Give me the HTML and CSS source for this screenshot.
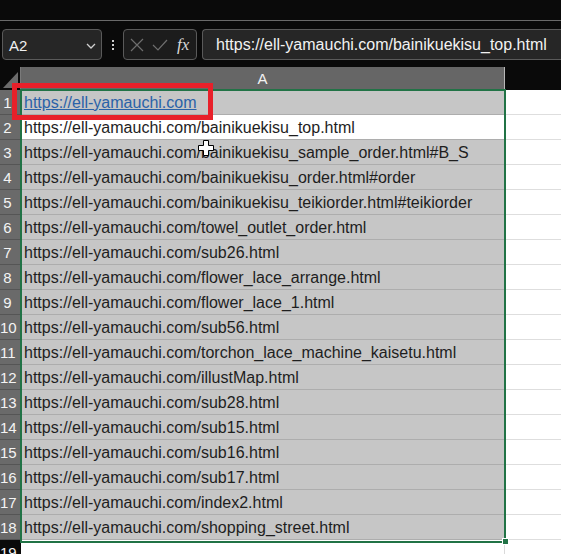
FILE: index.html
```html
<!DOCTYPE html>
<html>
<head>
<meta charset="utf-8">
<link rel="stylesheet" href="styles.css">
</head>
<body>
<div class="app">
  <div class="topbar"></div>
  <div class="formula-row">
    <div class="namebox">
      <span class="cellref">A2</span>
      <svg class="chev" width="10" height="6" viewBox="0 0 10 6"><path d="M1 1 L5 5 L9 1" fill="none" stroke="#d0d0d0" stroke-width="1.3"/></svg>
    </div>
    <div class="dots"><i></i><i></i><i></i></div>
    <div class="fxbox">
      <svg width="14" height="14" viewBox="0 0 14 14"><path d="M1 1 L13 13 M13 1 L1 13" stroke="#6e6e6e" stroke-width="1.2" fill="none"/></svg>
      <svg width="16" height="12" viewBox="0 0 16 12"><path d="M1 6 L6 11 L15 1" stroke="#6e6e6e" stroke-width="1.2" fill="none"/></svg>
      <span class="fx">fx</span>
    </div>
    <div class="formula">https://ell-yamauchi.com/bainikuekisu_top.html</div>
  </div>
  <div class="sheet">
    <div class="grid">
      <div class="corner"><svg width="21" height="23" viewBox="0 0 21 23"><polygon points="3,21 18,21 18,5" fill="#6b6b6b"/></svg></div>
      <div class="colhead">A</div>
      <div class="colrest"></div>

      <div class="rh">1</div><div class="c sel"><span class="link">https://ell-yamauchi.com</span></div><div class="b"></div>
      <div class="rh">2</div><div class="c active">https://ell-yamauchi.com/bainikuekisu_top.html</div><div class="b"></div>
      <div class="rh">3</div><div class="c sel">https://ell-yamauchi.com/bainikuekisu_sample_order.html#B_S</div><div class="b"></div>
      <div class="rh">4</div><div class="c sel">https://ell-yamauchi.com/bainikuekisu_order.html#order</div><div class="b"></div>
      <div class="rh">5</div><div class="c sel">https://ell-yamauchi.com/bainikuekisu_teikiorder.html#teikiorder</div><div class="b"></div>
      <div class="rh">6</div><div class="c sel">https://ell-yamauchi.com/towel_outlet_order.html</div><div class="b"></div>
      <div class="rh">7</div><div class="c sel">https://ell-yamauchi.com/sub26.html</div><div class="b"></div>
      <div class="rh">8</div><div class="c sel">https://ell-yamauchi.com/flower_lace_arrange.html</div><div class="b"></div>
      <div class="rh">9</div><div class="c sel">https://ell-yamauchi.com/flower_lace_1.html</div><div class="b"></div>
      <div class="rh">10</div><div class="c sel">https://ell-yamauchi.com/sub56.html</div><div class="b"></div>
      <div class="rh">11</div><div class="c sel">https://ell-yamauchi.com/torchon_lace_machine_kaisetu.html</div><div class="b"></div>
      <div class="rh">12</div><div class="c sel">https://ell-yamauchi.com/illustMap.html</div><div class="b"></div>
      <div class="rh">13</div><div class="c sel">https://ell-yamauchi.com/sub28.html</div><div class="b"></div>
      <div class="rh">14</div><div class="c sel">https://ell-yamauchi.com/sub15.html</div><div class="b"></div>
      <div class="rh">15</div><div class="c sel">https://ell-yamauchi.com/sub16.html</div><div class="b"></div>
      <div class="rh">16</div><div class="c sel">https://ell-yamauchi.com/sub17.html</div><div class="b"></div>
      <div class="rh">17</div><div class="c sel">https://ell-yamauchi.com/index2.html</div><div class="b"></div>
      <div class="rh">18</div><div class="c sel">https://ell-yamauchi.com/shopping_street.html</div><div class="b"></div>
      <div class="rh rh-off">19</div><div class="c plain"></div><div class="b"></div>
    </div>
    <div class="selection"></div>
    <div class="handle"></div>
    <div class="annot"></div>
    <svg class="cursor" width="16" height="16" viewBox="0 0 16 16"><path d="M5.5 0.5 H10.5 V5.5 H15.5 V10.5 H10.5 V15.5 H5.5 V10.5 H0.5 V5.5 H5.5 Z" fill="#fff" stroke="#000" stroke-width="1"/></svg>
  </div>
</div>
</body>
</html>
```
FILE: styles.css
```css
html, body {
  margin: 0;
  padding: 0;
  background: #0a0a0a;
  overflow: hidden;
}
.app {
  width: 561px;
  height: 554px;
  overflow: hidden;
  font-family: "Liberation Sans", Arial, sans-serif;
}
.topbar {
  height: 20px;
  border-bottom: 1px solid #6a6a6a;
}
.formula-row {
  margin-top: 8px;
  height: 31px;
  display: flex;
  align-items: stretch;
  padding-left: 2px;
}
.namebox {
  border: 1px solid #5a5a5a;
  border-radius: 4px;
  background: #262626;
  display: flex;
  align-items: center;
  justify-content: space-between;
  padding: 0 5px 0 6px;
  box-sizing: border-box;
  width: 100px;
}
.cellref {
  color: #f0f0f0;
  font-size: 15px;
  padding-top: 2px;
}
.chev { margin-top: 2px; }
.dots {
  width: 21px;
  display: flex;
  flex-direction: column;
  align-items: center;
  justify-content: center;
  gap: 2px;
}
.dots i {
  width: 2px;
  height: 2px;
  background: #cfcfcf;
  display: block;
}
.fxbox {
  width: 74px;
  box-sizing: border-box;
  border: 1px solid #5a5a5a;
  border-radius: 4px;
  background: #1c1c1c;
  display: flex;
  align-items: center;
  padding: 0 4px 0 6px;
  gap: 8px;
}
.fx {
  font-family: "Liberation Serif", serif;
  font-style: italic;
  color: #d8d8d8;
  font-size: 17px;
  margin-left: 1px;
}
.formula {
  margin-left: 5px;
  flex: 1;
  border: 1px solid #5a5a5a;
  border-right: none;
  border-radius: 4px 0 0 4px;
  background: #262626;
  color: #f2f2f2;
  font-size: 16px;
  display: flex;
  align-items: center;
  padding-left: 13px;
  white-space: nowrap;
  overflow: hidden;
}
.sheet {
  position: relative;
  margin-top: 7px;
}
.grid {
  display: grid;
  grid-template-columns: 21px 484px 1fr;
  grid-auto-rows: 25px;
  grid-template-rows: 23px;
}
.corner {
  background: #0a0a0a;
  border-right: 1px solid #7a7a7a;
  box-sizing: border-box;
  height: 23px;
  overflow: hidden;
}
.corner svg { display: block; }
.colhead {
  background: #666666;
  color: #f2f2f2;
  font-size: 15px;
  text-align: center;
  line-height: 24px;
  border-right: 1px solid #b8b8b8;
}
.colrest { background: #0a0a0a; }
.rh {
  background: #6a6a6a;
  color: #f4f4f4;
  font-size: 15px;
  line-height: 22px;
  padding-top: 2px;
  border-bottom: 1px solid #555;
  text-align: center;
  padding-right: 6px;
  box-sizing: border-box;
  white-space: nowrap;
}
.rh-off { background: #0a0a0a; border-bottom: none; }
.c {
  font-size: 16px;
  color: #1e1e1e;
  line-height: 22px;
  padding-top: 2px;
  padding-left: 3px;
  border-bottom: 1px solid #adadad;
  border-right: 1px solid #bdbdbd;
  white-space: nowrap;
  overflow: hidden;
  box-sizing: border-box;
}
.sel { background: #c6c6c6; }
.active { background: #ffffff; }
.plain { background: #ffffff; border-bottom: none; border-right: 1px solid #dadada; }
.link {
  color: #2a62a8;
  text-decoration: underline;
}
.b {
  background: #ffffff;
  border-bottom: 1px solid #dedede;
}
.selection {
  position: absolute;
  left: 20px;
  top: 22px;
  width: 486px;
  height: 454px;
  box-sizing: border-box;
  border: 2px solid #217346;
  pointer-events: none;
}
.handle {
  position: absolute;
  left: 502px;
  top: 471px;
  width: 7px;
  height: 7px;
  background: #217346;
  border: 1px solid #fff;
  box-sizing: border-box;
}
.annot {
  position: absolute;
  left: 12px;
  top: 16px;
  width: 201px;
  height: 37px;
  box-sizing: border-box;
  border: 5px solid #e8202a;
}
.cursor {
  position: absolute;
  left: 198px;
  top: 73px;
}
```
